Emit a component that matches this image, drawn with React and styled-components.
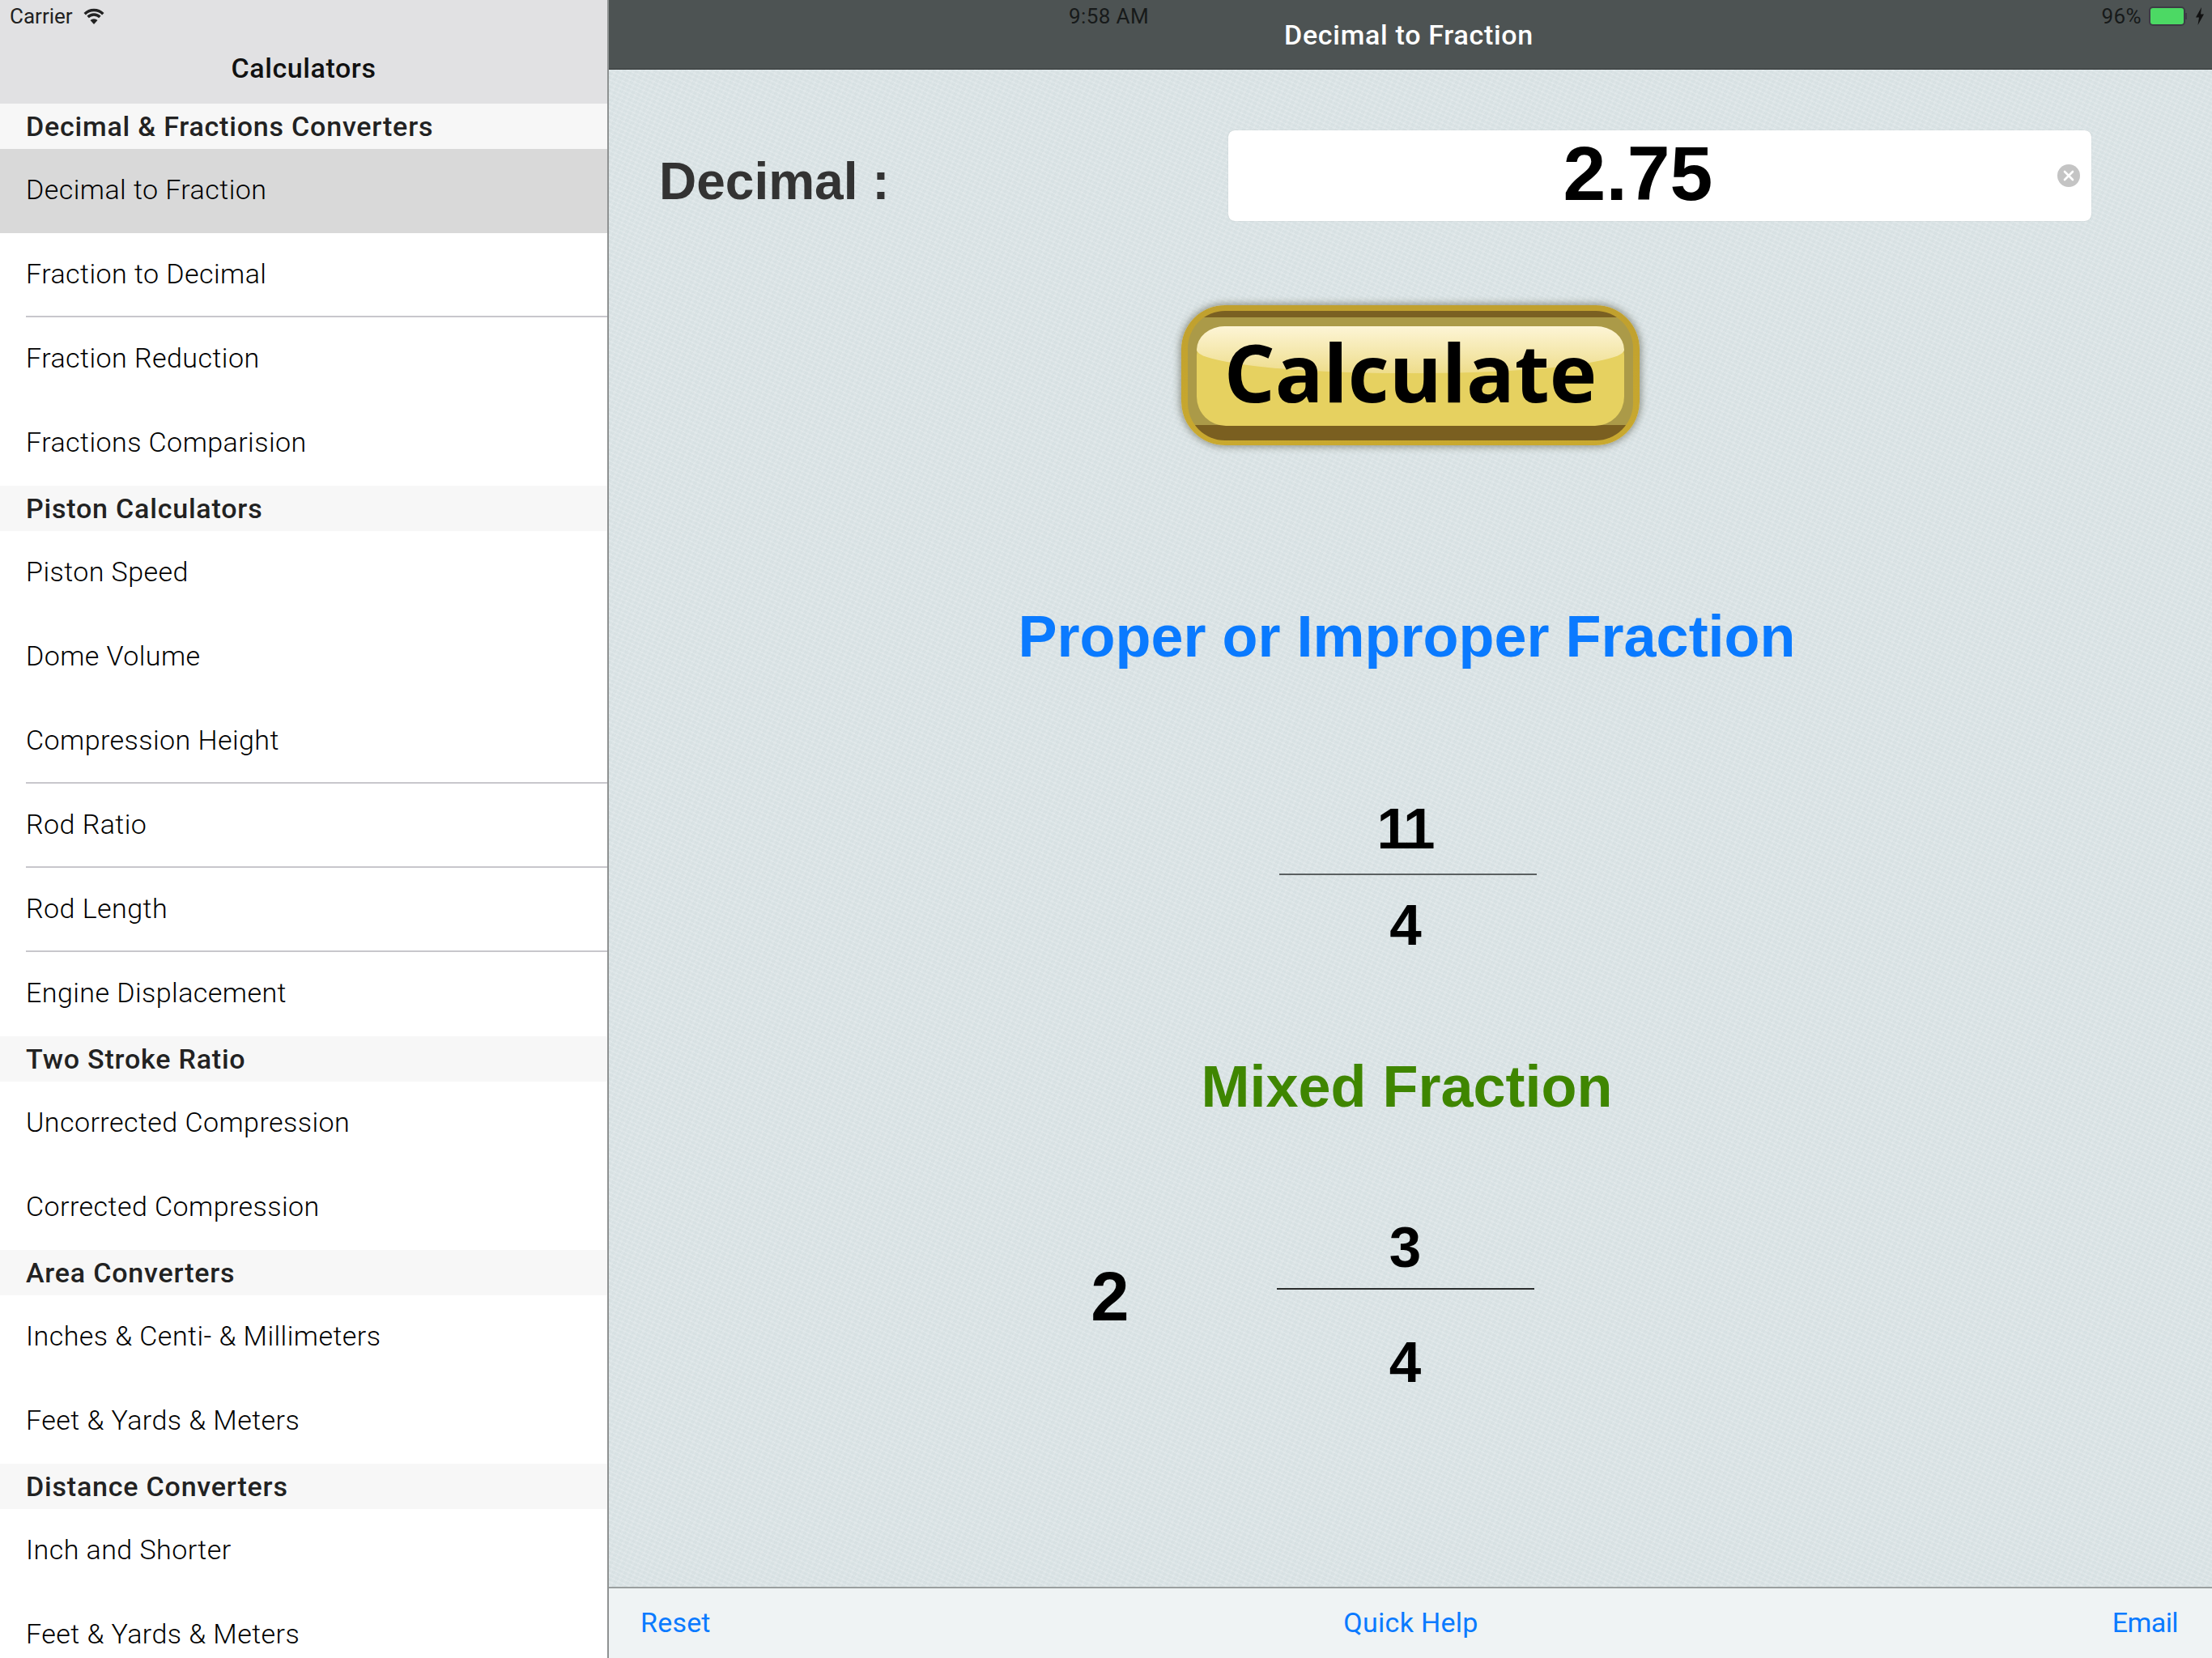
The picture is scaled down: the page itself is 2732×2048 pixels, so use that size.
import React from "react";
import styled, { createGlobalStyle } from "styled-components";

const GlobalStyle = createGlobalStyle`
  html, body {
    margin: 0;
    padding: 0;
    background: #fff;
  }
  * {
    box-sizing: border-box;
  }
`;

const Screen = styled.div`
  width: 2732px;
  height: 2048px;
  display: flex;
  overflow: hidden;
  font-family: "Roboto", "Liberation Sans", sans-serif;
`;

/* left column */
const Sidebar = styled.aside`
  width: 752px;
  height: 2048px;
  flex-shrink: 0;
  overflow: hidden;
  border-right: 2px solid #8f9292;
  background: #fff;
`;

const SideHeader = styled.header`
  height: 128px;
  display: flex;
  flex-direction: column;
  background: #e1e1e3;
`;

const CarrierRow = styled.div`
  height: 40px;
  padding-left: 12px;
  display: flex;
  align-items: center;
  gap: 12px;
  font-size: 26px;
  color: #222;
`;

const SideTitle = styled.div`
  margin-top: 14px;
  text-align: center;
  font-size: 34px;
  line-height: 60px;
  font-weight: 500;
  letter-spacing: 0.6px;
  color: #111;
`;

const SectionHead = styled.div`
  height: 56px;
  padding-left: 32px;
  font-size: 34px;
  line-height: 57px;
  font-weight: 500;
  letter-spacing: 0.8px;
  color: #222;
  background: #f7f7f7;
`;

const Row = styled.div`
  height: 104px;
  padding-left: 32px;
  font-size: 34px;
  line-height: 101px;
  font-weight: 300;
  letter-spacing: 0.45px;
  color: #000;
  background: ${(p) => (p.$selected ? "#d9d9d9" : "#fff")};
  position: relative;
  ${(p) =>
    p.$divider &&
    `
    &::after {
      content: "";
      position: absolute;
      left: 32px;
      right: 0;
      bottom: 0;
      height: 2px;
      background: #c8c7cc;
    }
  `}
`;

/* right column */
const Panel = styled.main`
  flex: 1;
  height: 2048px;
  display: flex;
  flex-direction: column;
`;

const NavBar = styled.header`
  height: 86px;
  flex-shrink: 0;
  display: grid;
  background: #4d5353;
  border-bottom: 1px solid #2f3333;
  & > * {
    grid-area: 1 / 1;
  }
`;

const StatusStrip = styled.div`
  height: 40px;
  padding: 0 9px 0 568px;
  display: flex;
  align-items: center;
  justify-content: space-between;
  font-size: 26px;
  letter-spacing: 0.4px;
  color: #171a1a;
`;

const BatteryGroup = styled.div`
  display: flex;
  align-items: center;
  gap: 9px;
`;

const NavTitle = styled.div`
  align-self: center;
  padding-right: 4px;
  padding-top: 1px;
  text-align: center;
  font-size: 34px;
  font-weight: 500;
  letter-spacing: 0.7px;
  color: #fff;
`;

const Canvas = styled.div`
  flex: 1;
  display: flex;
  flex-direction: column;
  align-items: center;
  background-color: #dce5e7;
  background-image:
    repeating-linear-gradient(24deg, rgba(255, 255, 255, 0.09) 0 2px, rgba(120, 140, 145, 0.03) 2px 5px),
    repeating-linear-gradient(-66deg, rgba(255, 255, 255, 0.05) 0 3px, rgba(120, 140, 145, 0.02) 3px 7px);
`;

const DecimalRow = styled.div`
  width: 100%;
  margin-top: 75px;
  padding: 0 149px 0 62px;
  display: flex;
  align-items: center;
  justify-content: space-between;
`;

const DecimalLabel = styled.label`
  padding-top: 13px;
  font-family: "Liberation Sans", Arial, sans-serif;
  font-size: 64px;
  font-weight: 700;
  color: #333;
`;

const Field = styled.div`
  width: 1066px;
  height: 112px;
  padding-right: 14px;
  display: flex;
  align-items: center;
  background: #fff;
  border-radius: 8px;
  box-shadow: 0 0 1px rgba(120, 130, 130, 0.5);
`;

const FieldValue = styled.div`
  flex: 1;
  margin-right: 12px;
  padding-bottom: 6px;
  text-align: center;
  font-family: "Liberation Sans", Arial, sans-serif;
  font-size: 95px;
  font-weight: 700;
  color: #000;
`;

const GlossyButton = styled.button`
  margin-top: 104px;
  width: 566px;
  height: 173px;
  padding: 0;
  display: block;
  position: relative;
  border: none;
  border-radius: 54px;
  background: linear-gradient(#c0a02e, #c9a92f);
  box-shadow: 0 0 8px 2px rgba(70, 70, 50, 0.5);
  font-family: "Open Sans", "Noto Sans", sans-serif;
  &::before {
    content: "";
    position: absolute;
    inset: 7px 8px 6px;
    border-radius: 46px;
    background: linear-gradient(#7a6022 0 8px, #ab9a48 8px 24px, #ab9a48 88%, #7a5f20 88%);
  }
`;

const ButtonFace = styled.span`
  position: absolute;
  inset: 26px 19px 24px;
  border-radius: 36px;
  display: flex;
  align-items: center;
  justify-content: center;
  background: #e6d160;
  &::before {
    content: "";
    position: absolute;
    left: 0;
    right: 0;
    top: 0;
    height: 58px;
    border-radius: 36px 36px 50% 50% / 30px 30px 30px 30px;
    background: linear-gradient(#fdf5d6, #eedd8c);
  }
`;

const ButtonText = styled.span`
  position: relative;
  padding-bottom: 12px;
  font-size: 99px;
  font-weight: 700;
  line-height: 1;
  color: #000;
`;

const Heading = styled.h2`
  margin: ${(p) => p.$top}px 9px 0 0;
  height: 80px;
  font-family: "Liberation Sans", Arial, sans-serif;
  font-size: 72px;
  line-height: 80px;
  font-weight: 700;
  color: ${(p) => p.$color};
`;

const FractionBox = styled.div`
  width: 318px;
  margin-top: ${(p) => p.$top || 0}px;
  margin-right: ${(p) => p.$nudge || 0}px;
  display: flex;
  flex-direction: column;
  align-items: center;
  font-family: "Liberation Sans", Arial, sans-serif;
  font-size: 71px;
  line-height: 80px;
  font-weight: 700;
  color: #000;
`;

const Digit = styled.div`
  height: 80px;
  margin-right: ${(p) => p.$nudge}px;
  letter-spacing: ${(p) => p.$tight || 0}px;
`;

const Rule = styled.div`
  width: 100%;
  height: 2px;
  margin: ${(p) => p.$above}px 0 ${(p) => p.$below}px;
  background: ${(p) => p.$color};
`;

const MixedRow = styled.div`
  width: 100%;
  margin-top: 119px;
  padding-left: 569px;
  display: flex;
  align-items: center;
  gap: 156px;
`;

const WholePart = styled.div`
  width: 100px;
  margin-bottom: 20px;
  text-align: center;
  font-family: "Liberation Sans", Arial, sans-serif;
  font-size: 85px;
  font-weight: 700;
  color: #000;
`;

const Footer = styled.footer`
  height: 88px;
  flex-shrink: 0;
  padding: 0 42px 2px 39px;
  display: grid;
  grid-template-columns: 1fr auto 1fr;
  align-items: center;
  background: #eff3f4;
  border-top: 2px solid #9a9f9f;
`;

const FooterLink = styled.a`
  margin-left: ${(p) => p.$shift || 0}px;
  font-size: 34px;
  letter-spacing: ${(p) => p.$spacing ?? 0.2}px;
  color: #0a7aff;
  text-align: ${(p) => p.$align || "left"};
`;

const WifiIcon = () => (
  <svg width="28" height="20" viewBox="0 0 28 20">
    <path d="M14 20 L9.5 15 A6.4 6.4 0 0 1 18.5 15 Z" fill="#222" />
    <path d="M6.6 11 A10.5 10.5 0 0 1 21.4 11 M2.7 7.2 A16 16 0 0 1 25.3 7.2" fill="none" stroke="#222" strokeWidth="3.4" />
  </svg>
);

const BatteryIcon = () => (
  <svg width="48" height="24" viewBox="0 0 48 24">
    <rect x="1" y="1" width="43" height="22" rx="4" fill="#4cd964" stroke="#3d3a45" strokeWidth="2" />
    <rect x="45" y="8" width="2" height="8" fill="#3d3a45" />
  </svg>
);

const BoltIcon = () => (
  <svg width="12" height="22" viewBox="0 0 12 22">
    <path d="M8 0 L1 12.5 H5 L3.5 22 L11 8.5 H7 Z" fill="#111" />
  </svg>
);

const ClearIcon = () => (
  <svg width="28" height="28" viewBox="0 0 28 28">
    <circle cx="14" cy="14" r="14" fill="#c4c4c4" />
    <path d="M9 9 L19 19 M19 9 L9 19" stroke="#fff" strokeWidth="2.6" strokeLinecap="round" />
  </svg>
);

const menu = [
  { head: "Decimal & Fractions Converters" },
  { label: "Decimal to Fraction", selected: true },
  { label: "Fraction to Decimal", divider: true },
  { label: "Fraction Reduction" },
  { label: "Fractions Comparision" },
  { head: "Piston Calculators" },
  { label: "Piston Speed" },
  { label: "Dome Volume" },
  { label: "Compression Height", divider: true },
  { label: "Rod Ratio", divider: true },
  { label: "Rod Length", divider: true },
  { label: "Engine Displacement" },
  { head: "Two Stroke Ratio" },
  { label: "Uncorrected Compression" },
  { label: "Corrected Compression" },
  { head: "Area Converters" },
  { label: "Inches & Centi- & Millimeters" },
  { label: "Feet & Yards & Meters" },
  { head: "Distance Converters" },
  { label: "Inch and Shorter" },
  { label: "Feet & Yards & Meters" },
];

const App = () => {
  return (
    <>
      <GlobalStyle />
      <Screen>
        <Sidebar>
          <SideHeader>
            <CarrierRow>
              Carrier
              <WifiIcon />
            </CarrierRow>
            <SideTitle>Calculators</SideTitle>
          </SideHeader>
          {menu.map((item, i) =>
            item.head ? (
              <SectionHead key={i}>{item.head}</SectionHead>
            ) : (
              <Row key={i} $selected={item.selected} $divider={item.divider}>
                {item.label}
              </Row>
            )
          )}
        </Sidebar>
        <Panel>
          <NavBar>
            <StatusStrip>
              <span>9:58 AM</span>
              <BatteryGroup>
                <span>96%</span>
                <BatteryIcon />
                <BoltIcon />
              </BatteryGroup>
            </StatusStrip>
            <NavTitle>Decimal to Fraction</NavTitle>
          </NavBar>
          <Canvas>
            <DecimalRow>
              <DecimalLabel>Decimal :</DecimalLabel>
              <Field>
                <FieldValue>2.75</FieldValue>
                <ClearIcon />
              </Field>
            </DecimalRow>
            <GlossyButton>
              <ButtonFace>
                <ButtonText>Calculate</ButtonText>
              </ButtonFace>
            </GlossyButton>
            <Heading $top={196} $color="#0a7aff">
              Proper or Improper Fraction
            </Heading>
            <FractionBox $top={158} $nudge={6}>
              <Digit $nudge={8} $tight={-3}>11</Digit>
              <Rule $above={15} $below={22} $color="#5a5f60" />
              <Digit $nudge={6}>4</Digit>
            </FractionBox>
            <Heading $top={119} $color="#3f8600">
              Mixed Fraction
            </Heading>
            <MixedRow>
              <WholePart>2</WholePart>
              <FractionBox>
                <Digit $nudge={1}>3</Digit>
                <Rule $above={10} $below={50} $color="#2a2d2d" />
                <Digit $nudge={1}>4</Digit>
              </FractionBox>
            </MixedRow>
          </Canvas>
          <Footer>
            <FooterLink>Reset</FooterLink>
            <FooterLink $shift={4} $spacing={0.3}>Quick Help</FooterLink>
            <FooterLink $align="right" $spacing={-0.6}>Email</FooterLink>
          </Footer>
        </Panel>
      </Screen>
    </>
  );
};

export default App;
